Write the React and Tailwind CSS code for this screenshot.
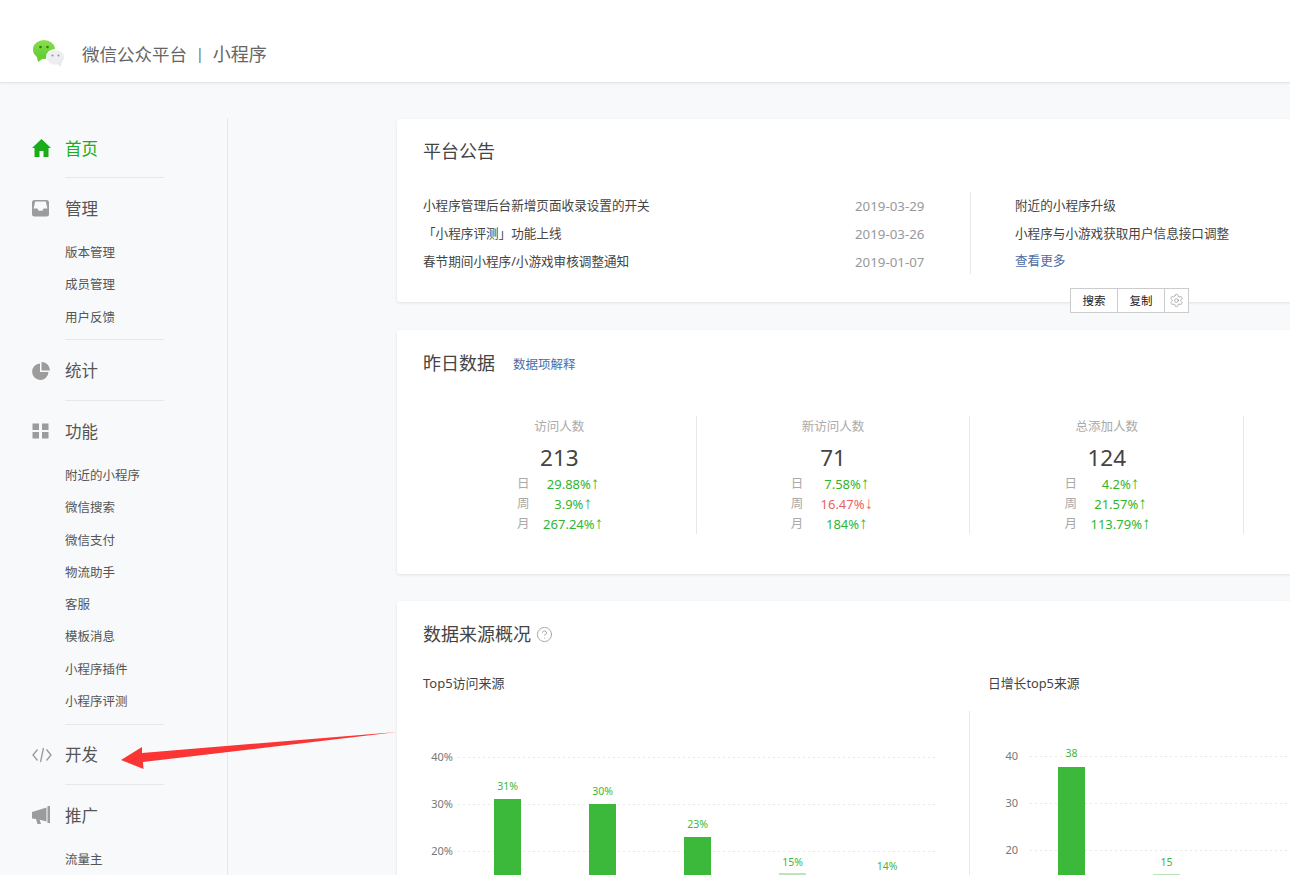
import React from 'react';
import { Settings, CircleHelp } from 'lucide-react';

const FONT = "font-['Noto_Sans','Noto_Sans_CJK_SC',sans-serif]";

function Logo() {
  return (
    <svg width="32" height="27" viewBox="0 0 32 27" className="mr-[17px] shrink-0 mb-[1px]">
      <defs>
        <linearGradient id="lg" x1="0" y1="0" x2="0" y2="1">
          <stop offset="0" stopColor="#8be04a" />
          <stop offset="1" stopColor="#5cc935" />
        </linearGradient>
      </defs>
      <ellipse cx="11" cy="9.5" rx="11" ry="9.5" fill="url(#lg)" />
      <path d="M3.5 15 L5 22 L11 18 Z" fill="#66cf38" />
      <circle cx="7.5" cy="7" r="1.3" fill="#2f7d1f" />
      <circle cx="14.5" cy="7" r="1.3" fill="#2f7d1f" />
      <ellipse cx="22.5" cy="17" rx="9.5" ry="8" fill="#ffffff" />
      <ellipse cx="22.5" cy="17.5" rx="8.7" ry="7.3" fill="#eceef2" />
      <path d="M24 23 L28 27 L28.5 21 Z" fill="#e6e8ec" />
      <circle cx="19.5" cy="15.5" r="1" fill="#8f8f8f" />
      <circle cx="25.5" cy="15.5" r="1" fill="#8f8f8f" />
    </svg>
  );
}

function HomeIcon() {
  return (
    <svg width="19" height="18" viewBox="0 0 19 18" fill="#1aad19">
      <path d="M9.5 0 L19 9 H16.5 V18 H11.5 V12 H7.5 V18 H2.5 V9 H0 Z" />
    </svg>
  );
}

function InboxIcon() {
  return (
    <svg width="17" height="17" viewBox="0 0 17 17">
      <rect width="17" height="16.5" rx="2.5" fill="#9c9c9c" />
      <path d="M3.2 1.6 H13.8 L15.4 8.5 H11.6 L10.4 10.8 H6.6 L5.4 8.5 H1.6 Z" fill="#f8f9fb" />
    </svg>
  );
}

function PieIcon() {
  return (
    <svg width="18" height="18" viewBox="0 0 18 18" fill="#9c9c9c">
      <path d="M8 1.5 A8.2 8.2 0 1 0 16.5 10 H8 Z" />
      <path d="M9.5 0 A8.5 8.5 0 0 1 18 8.5 H9.5 Z" />
    </svg>
  );
}

function GridIcon() {
  return (
    <svg width="17" height="17" viewBox="0 0 17 17" fill="#9c9c9c">
      <rect x="0.5" y="0.5" width="6.5" height="6.5" />
      <rect x="10" y="0.5" width="6.5" height="6.5" />
      <rect x="0.5" y="9" width="6.5" height="6.5" />
      <rect x="10" y="9" width="6.5" height="6.5" />
    </svg>
  );
}

function HornIcon() {
  return (
    <svg width="18" height="18" viewBox="0 0 18 18" fill="#9c9c9c">
      <path d="M15.5 0 H18 V17 H15.5 Z" />
      <path d="M14.5 1.5 L0 6 V12.5 L4 13 L5.5 18 H9 L7.6 13.8 L14.5 15.5 Z" />
    </svg>
  );
}

function CodeIcon() {
  return (
    <svg width="20" height="16" viewBox="0 0 20 16" fill="none" stroke="#999" strokeWidth="1.3">
      <path d="M5.5 2.5 L1 8 L5.5 13.5" />
      <path d="M14.5 2.5 L19 8 L14.5 13.5" />
      <path d="M11.5 1 L8.5 15" />
    </svg>
  );
}

function NavMain({ icon, label, active, line, height = 'h-[60px]', textPad = 'pt-[2px]' }) {
  return (
    <div className={`relative flex items-center ${height}`}>
      <span className="w-[65px] pl-[32px] flex items-center h-5">{icon}</span>
      <span className={`text-[16.5px] ${textPad} ${active ? 'text-[#1aad19]' : 'text-[#555]'}`}>{label}</span>
      {line && <div className="absolute left-[65px] bottom-0 w-[99px] h-px bg-[#e7e8ea]" />}
    </div>
  );
}

function NavSubs({ items, offset }) {
  return (
    <div className={offset}>
      {items.map((t) => (
        <div key={t} className="h-[32.3px] leading-[32.3px] pl-[65px] text-[12.5px] text-[#555]">{t}</div>
      ))}
    </div>
  );
}

function Sidebar() {
  return (
    <aside className="w-[228px] shrink-0 mt-[35px] border-r border-[#e7e8ea]">
      <NavMain active line label="首页" icon={<HomeIcon />} />
      <NavMain label="管理" icon={<InboxIcon />} />
      <div className="relative h-[102px] flow-root">
        <NavSubs items={['版本管理', '成员管理', '用户反馈']} offset="-mt-[1px]" />
        <div className="absolute left-[65px] bottom-0 w-[99px] h-px bg-[#e7e8ea]" />
      </div>
      <NavMain line label="统计" height="h-[61px]" icon={<PieIcon />} />
      <NavMain label="功能" height="h-[61px]" icon={<GridIcon />} />
      <div className="relative h-[263px] flow-root">
        <NavSubs items={['附近的小程序', '微信搜索', '微信支付', '物流助手', '客服', '模板消息', '小程序插件', '小程序评测']} offset="-mt-[2px]" />
        <div className="absolute left-[65px] bottom-0 w-[99px] h-px bg-[#e7e8ea]" />
      </div>
      <NavMain line label="开发" textPad="pt-0" icon={<CodeIcon />} />
      <NavMain label="推广" icon={<HornIcon />} />
      <div className="flow-root">
        <NavSubs items={['流量主']} offset="-mt-[1px]" />
      </div>
    </aside>
  );
}

function Notices() {
  const left = [
    ['小程序管理后台新增页面收录设置的开关', '2019-03-29'],
    ['「小程序评测」功能上线', '2019-03-26'],
    ['春节期间小程序/小游戏审核调整通知', '2019-01-07'],
  ];
  return (
    <section className="relative h-[183px] bg-white rounded-[3px] shadow-[0_1px_3px_rgba(0,0,0,0.1)] pl-[26px] pt-[19px] mb-[28px]">
      <h2 className="text-[18px] leading-[26px] text-[#444] font-normal">平台公告</h2>
      <div className="flex mt-[28px]">
        <div className="w-[502px]">
          {left.map(([t, d]) => (
            <div key={t} className="h-[28px] leading-[28px] flex text-[12.6px] text-[#444]">
              <span className="w-[432px]">{t}</span>
              <span className="text-[13.3px] text-[#999]">{d}</span>
            </div>
          ))}
        </div>
        <div className="w-[300px] h-[82px] border-l border-[#e7e8ea] pl-[44px] ml-[45px] text-[12.6px] leading-[28px] text-[#444]">
          <div>附近的小程序升级</div>
          <div>小程序与小游戏获取用户信息接口调整</div>
          <div className="text-[#4d6ea3] -mt-[1px]">查看更多</div>
        </div>
      </div>
      <div className="absolute left-[673px] top-[169px] z-10 flex h-[25px] bg-white border border-[#ccc] text-[11.5px] text-[#222]">
        <span className="w-[47px] flex items-center justify-center border-r border-[#ccc]">搜索</span>
        <span className="w-[47px] flex items-center justify-center border-r border-[#ccc]">复制</span>
        <span className="w-[23px] flex items-center justify-center"><Settings size={15} strokeWidth={1} color="#888" /></span>
      </div>
    </section>
  );
}

function Row({ k, v, down }) {
  const color = down ? 'text-[#e86464]' : 'text-[#2fb52e]';
  return (
    <div className="flex justify-center h-[20px] leading-[20px]">
      <span className="w-[26px] text-center text-[12.5px] text-[#aaa]">{k}</span>
      <span className={`w-[72px] text-center text-[13px] whitespace-nowrap ${color}`}>
        {v}
        <span className="inline-block w-[7px] leading-none text-center text-[17px] font-['Liberation_Sans',sans-serif]">{down ? '↓' : '↑'}</span>
      </span>
    </div>
  );
}

function Stat({ title, num, rows }) {
  return (
    <div className="w-[273.7px] h-[118px] border-r border-[#e7e8ea] text-center">
      <div className="text-[12.5px] leading-[20px] pt-[1px] text-[#aaa]">{title}</div>
      <div className="text-[22.5px] leading-[32px] mt-[5px] text-[#444]">{num}</div>
      <div>
        {rows.map((r) => <Row key={r[0]} k={r[0]} v={r[1]} down={r[2]} />)}
      </div>
    </div>
  );
}

function Yesterday() {
  return (
    <section className="h-[244px] bg-white rounded-[3px] shadow-[0_1px_3px_rgba(0,0,0,0.1)] pl-[26px] pt-[20px] mb-[27px]">
      <div className="flex items-baseline">
        <h2 className="text-[18px] leading-[26px] text-[#444] font-normal">昨日数据</h2>
        <span className="ml-[18px] text-[12.5px] text-[#4d6ea3] -translate-y-px">数据项解释</span>
      </div>
      <div className="flex mt-[40px]">
        <Stat title="访问人数" num="213" rows={[['日', '29.88%'], ['周', '3.9%'], ['月', '267.24%']]} />
        <Stat title="新访问人数" num="71" rows={[['日', '7.58%'], ['周', '16.47%', true], ['月', '184%']]} />
        <Stat title="总添加人数" num="124" rows={[['日', '4.2%'], ['周', '21.57%'], ['月', '113.79%']]} />
      </div>
    </section>
  );
}

function Grid({ x1, x2, ys, labels, lx }) {
  return (
    <>
      {ys.map((y, i) => (
        <g key={y}>
          <line x1={x1} x2={x2} y1={y} y2={y} stroke="#e8e8e8" strokeDasharray="2 3" />
          <text x={lx} y={y + 3} textAnchor="end" fontSize="11" fill="#777">{labels[i]}</text>
        </g>
      ))}
    </>
  );
}

function Bar({ x, w = 27, top, label, labelY, bottom = 165, light }) {
  return (
    <g>
      <rect x={x} y={top} width={w} height={bottom - top} fill={light ? '#b9e6b8' : '#3cb83a'} />
      <text x={x + w / 2} y={labelY} textAnchor="middle" fontSize="10.5" fill="#3cb83a">{label}</text>
    </g>
  );
}

function Sources() {
  return (
    <section className="bg-white rounded-[3px] shadow-[0_1px_3px_rgba(0,0,0,0.1)] h-[300px] pt-[20px]">
      <div className="flex items-center pl-[26px] h-[26px]">
        <h2 className="text-[18px] text-[#444] font-normal">数据来源概况</h2>
        <CircleHelp size={17} strokeWidth={1.2} color="#999" className="ml-[5px]" />
      </div>
      <div className="flex mt-[26px]">
        <div className="w-[572px] shrink-0">
          <div className="pl-[26px] text-[13px] leading-[20px] text-[#444]">Top5访问来源</div>
          <svg width="572" height="170" className="block mt-[17px]">
            <Grid x1={61} x2={540} ys={[47.5, 94.5, 141.5]} labels={['40%', '30%', '20%']} lx={56} />
            <Bar x={97} top={89} label="31%" labelY={80} />
            <Bar x={192} top={94} label="30%" labelY={85} />
            <Bar x={287} top={127} label="23%" labelY={118} />
            <Bar x={382} top={163} label="15%" labelY={156} light />
            <text x={490} y={160} textAnchor="middle" fontSize="10.5" fill="#3cb83a">14%</text>
          </svg>
        </div>
        <div className="flex-1">
          <div className="pl-[19px] text-[12.8px] leading-[20px] text-[#444]">日增长top5来源</div>
          <div className="mt-[18px] border-l border-[#e7e8ea]">
            <svg width="322" height="180" className="block">
              <Grid x1={60} x2={322} ys={[45.5, 92.5, 139.5]} labels={['40', '30', '20']} lx={48} />
              <Bar x={88} top={56} label="38" labelY={46} bottom={175} />
              <Bar x={183} top={163} label="15" labelY={155} bottom={175} light />
            </svg>
          </div>
        </div>
      </div>
    </section>
  );
}

export default function App() {
  return (
    <div className={`relative w-[1290px] h-[890px] overflow-hidden bg-white ${FONT}`}>
      <header className="h-[83px] bg-white border-b border-[#e4e5e7] shadow-[0_1px_2px_rgba(0,0,0,0.05)] flex items-end pb-[14px] pl-[33px] relative z-10">
        <Logo />
        <span className="text-[17.5px] leading-[28px] text-[#666]">微信公众平台</span>
        <span className="mx-[9px] text-[14px] leading-[28px] text-[#666]">|</span>
        <span className="text-[18px] leading-[28px] text-[#666]">小程序</span>
      </header>
      <main className="h-[792px] bg-[#f8f9fb] flex overflow-hidden">
        <Sidebar />
        <div className="ml-[169px] mt-[36px] w-[1000px] shrink-0">
          <Notices />
          <Yesterday />
          <Sources />
        </div>
      </main>
      <svg width="400" height="60" className="absolute left-0 top-[725px] z-20 pointer-events-none">
        <polygon points="121,35 142,22 142,28 397,7 143,37 143.5,44" fill="#fb3434" />
      </svg>
    </div>
  );
}
